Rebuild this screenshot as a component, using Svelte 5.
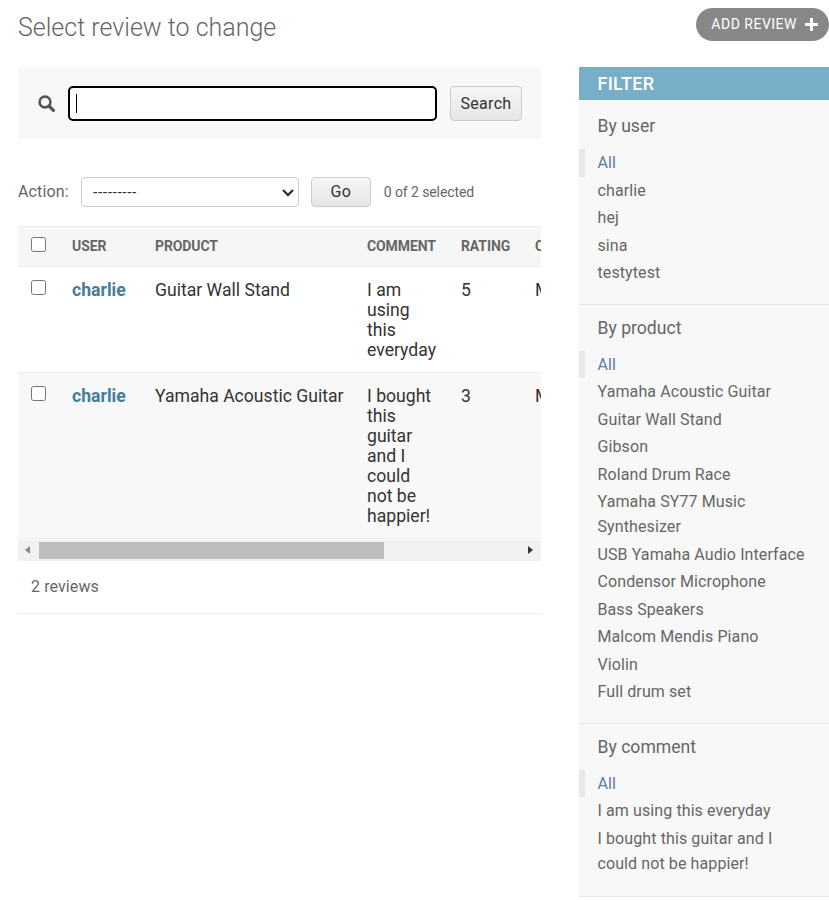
<script>
	const rows = [
		{ user: "charlie", product: "Guitar Wall Stand", comment: "I am using this everyday", rating: 5 },
		{ user: "charlie", product: "Yamaha Acoustic Guitar", comment: "I bought this guitar and I could not be happier!", rating: 3 }
	];

	const filters = [
		{ title: "By user", items: ["All", "charlie", "hej", "sina", "testytest"] },
		{
			title: "By product",
			items: [
				"All",
				"Yamaha Acoustic Guitar",
				"Guitar Wall Stand",
				"Gibson",
				"Roland Drum Race",
				"Yamaha SY77 Music Synthesizer",
				"USB Yamaha Audio Interface",
				"Condensor Microphone",
				"Bass Speakers",
				"Malcom Mendis Piano",
				"Violin",
				"Full drum set"
			]
		},
		{ title: "By comment", items: ["All", "I am using this everyday", "I bought this guitar and I could not be happier!"] }
	];
</script>

<div class="page">
	<header class="top">
		<h1>Select review to change</h1>
		<a class="add" href="#add">
			<span>ADD REVIEW</span>
			<svg width="13" height="13" viewBox="0 0 13 13"><path d="M5 0h3v5h5v3H8v5H5V8H0V5h5z" fill="#fff" /></svg>
		</a>
	</header>

	<div class="columns">
		<main class="changelist">
			<div class="search">
				<svg class="glass" width="17" height="17" viewBox="0 0 17 17">
					<circle cx="7" cy="7" r="5.4" fill="none" stroke="#555" stroke-width="2.6" />
					<path d="M11 11l4.4 4.4" stroke="#555" stroke-width="3.2" stroke-linecap="round" />
				</svg>
				<div class="field"><span class="caret"></span></div>
				<button class="btn search-btn">Search</button>
			</div>

			<div class="actions">
				<span class="label">Action:</span>
				<div class="select">
					<span>---------</span>
					<svg width="14" height="9" viewBox="0 0 14 9"><path d="M2 2l5 5 5-5" fill="none" stroke="#333" stroke-width="2.4" /></svg>
				</div>
				<button class="btn go">Go</button>
				<span class="count">0 of 2 selected</span>
			</div>

			<div class="table-wrap">
				<table>
					<colgroup>
						<col class="c-check" />
						<col class="c-user" />
						<col class="c-product" />
						<col class="c-comment" />
						<col class="c-rating" />
						<col class="c-created" />
					</colgroup>
					<thead>
						<tr>
							<th><span class="box head-box"></span></th>
							<th>USER</th>
							<th>PRODUCT</th>
							<th>COMMENT</th>
							<th>RATING</th>
							<th>CREATED</th>
						</tr>
					</thead>
					<tbody>
						{#each rows as row, i}
							<tr class:alt={i === 1}>
								<td><span class="box"></span></td>
								<td><a class="user" href="#user">{row.user}</a></td>
								<td>{row.product}</td>
								<td>{row.comment}</td>
								<td>{row.rating}</td>
								<td>March 3, 2021</td>
							</tr>
						{/each}
					</tbody>
				</table>
			</div>

			<div class="scrollbar">
				<span class="arrow left"></span>
				<div class="track"><div class="thumb"></div></div>
				<span class="arrow right"></span>
			</div>

			<p class="paginator">2 reviews</p>
		</main>

		<aside class="filter">
			<h2>FILTER</h2>
			{#each filters as group}
				<section>
					<h3>{group.title}</h3>
					<ul>
						{#each group.items as item, i}
							<li class:selected={i === 0}>{item}</li>
						{/each}
					</ul>
				</section>
			{/each}
		</aside>
	</div>
</div>

<style>
	:global(body) {
		margin: 0;
		background: #fff;
		font-family: Roboto, "Liberation Sans", sans-serif;
		color: #333;
	}

	.page {
		padding-left: 18px;
		height: 900px;
		overflow: hidden;
		box-sizing: border-box;
	}

	.top {
		display: flex;
		justify-content: space-between;
		align-items: flex-start;
		padding-top: 8px;
		height: 67px;
		box-sizing: border-box;
	}

	h1 {
		margin: 5px 0 0;
		font-size: 25px;
		line-height: 30px;
		font-weight: 300;
		color: #666;
	}

	.add {
		display: flex;
		align-items: center;
		gap: 8px;
		height: 33px;
		padding: 0 11px 0 15px;
		border-radius: 16.5px;
		background: #888;
		color: #fff;
		font-size: 14px;
		letter-spacing: 0.5px;
		text-decoration: none;
	}

	.add span {
		padding-bottom: 2px;
	}

	.columns {
		display: flex;
		align-items: flex-start;
	}

	.changelist {
		width: 523px;
		margin-right: 38px;
		flex: none;
	}

	.search {
		display: flex;
		align-items: center;
		height: 72px;
		padding: 0 19px 0 20px;
		background: #f8f8f8;
		box-sizing: border-box;
	}

	.glass {
		margin-right: 13px;
	}

	.field {
		display: flex;
		align-items: center;
		width: 369px;
		height: 35px;
		border: 2px solid #000;
		border-radius: 5px;
		background: #fff;
		padding-left: 6px;
		box-sizing: border-box;
		margin-right: 13px;
	}

	.caret {
		width: 1px;
		height: 19px;
		background: #000;
	}

	.btn {
		height: 35px;
		border: 1px solid #ccc;
		border-radius: 4px;
		background: linear-gradient(#f6f6f6, #e6e6e6);
		color: #333;
		font-family: inherit;
		font-size: 16px;
		letter-spacing: 0.3px;
		padding: 0;
	}

	.search-btn {
		width: 72px;
	}

	.actions {
		display: flex;
		align-items: center;
		height: 30px;
		margin-top: 38px;
		margin-bottom: 19px;
	}

	.label {
		font-size: 16px;
		letter-spacing: 0.15px;
		color: #666;
		margin-right: 12px;
		padding-bottom: 2px;
	}

	.select {
		display: flex;
		align-items: center;
		justify-content: space-between;
		width: 218px;
		height: 30px;
		border: 1px solid #ccc;
		border-radius: 4px;
		padding: 0 3px 0 11px;
		box-sizing: border-box;
		font-family: "Liberation Sans", sans-serif;
		font-size: 14.67px;
		margin-right: 12px;
	}

	.go {
		width: 60px;
		height: 30px;
		margin-right: 13px;
		padding-bottom: 2px;
	}

	.count {
		font-size: 14px;
		letter-spacing: -0.1px;
		color: #666;
	}

	.table-wrap {
		overflow: hidden;
	}

	table {
		table-layout: fixed;
		border-collapse: collapse;
		width: 640px;
	}

	.c-check { width: 41px; }
	.c-user { width: 83px; }
	.c-product { width: 212px; }
	.c-comment { width: 94px; }
	.c-rating { width: 74px; }
	.c-created { width: 136px; }

	th {
		text-align: left;
		height: 40px;
		padding: 0 10px 2px 13px;
		box-sizing: border-box;
		background: #f6f6f6;
		border-top: 1px solid #eee;
		border-bottom: 1px solid #eee;
		font-size: 14px;
		letter-spacing: -0.1px;
		font-weight: 700;
		color: #666;
		white-space: nowrap;
		overflow: hidden;
	}

	td {
		vertical-align: top;
		padding: 13px 9px 12px 13px;
		border-bottom: 1px solid #eee;
		font-size: 17.6px;
		line-height: 20px;
		color: #333;
	}

	tr.alt td {
		background: #f8f8f8;
	}

	.user {
		color: #447e9b;
		font-weight: 700;
		text-decoration: none;
	}

	.box {
		display: block;
		width: 13px;
		height: 13px;
		border: 1px solid #767676;
		border-radius: 2.5px;
		background: #fff;
	}

	.head-box {
		margin-bottom: 2px;
	}

	.scrollbar {
		display: flex;
		align-items: center;
		height: 21px;
		margin-top: 1px;
		background: #f1f1f1;
	}

	.track {
		flex: 1;
		height: 17px;
	}

	.thumb {
		width: 345px;
		height: 17px;
		background: #bdbdbd;
	}

	.arrow {
		width: 21px;
		flex: none;
		position: relative;
		height: 17px;
	}

	.arrow::after {
		content: "";
		position: absolute;
		top: 4px;
		border-top: 4.5px solid transparent;
		border-bottom: 4.5px solid transparent;
	}

	.arrow.left::after {
		left: 7px;
		border-right: 5px solid #888;
	}

	.arrow.right::after {
		right: 8px;
		border-left: 5px solid #333;
	}

	.paginator {
		margin: 0 -1px 0 0;
		height: 53px;
		padding-left: 13px;
		line-height: 52px;
		font-size: 16px;
		letter-spacing: 0.1px;
		color: #666;
		border-bottom: 1px solid #eee;
		box-sizing: border-box;
	}

	.filter {
		width: 250px;
		flex: none;
		background: #f8f8f8;
	}

	h2 {
		margin: 0;
		height: 33px;
		line-height: 33px;
		padding-left: 18.5px;
		background: #79aec8;
		color: #fff;
		font-size: 18px;
		letter-spacing: 0.3px;
		font-weight: 500;
	}

	section {
		padding: 9px 0 17px;
		border-bottom: 1px solid #e8e8e8;
	}

	section:first-of-type {
		padding-top: 12px;
	}

	section:last-of-type {
		padding-bottom: 19px;
	}

	h3 {
		margin: 0 0 9px;
		padding-left: 18.5px;
		font-size: 17.6px;
		line-height: 28px;
		font-weight: 400;
		color: #666;
	}

	ul {
		list-style: none;
		margin: 0;
		padding: 0;
	}

	li {
		padding: 1px 19px 1.5px 18.5px;
		font-size: 16px;
		letter-spacing: 0.1px;
		line-height: 25px;
		color: #666;
	}

	li.selected {
		color: #5f78ab;
		border-left: 6px solid #e8e8e8;
		padding-left: 12.5px;
	}
</style>
